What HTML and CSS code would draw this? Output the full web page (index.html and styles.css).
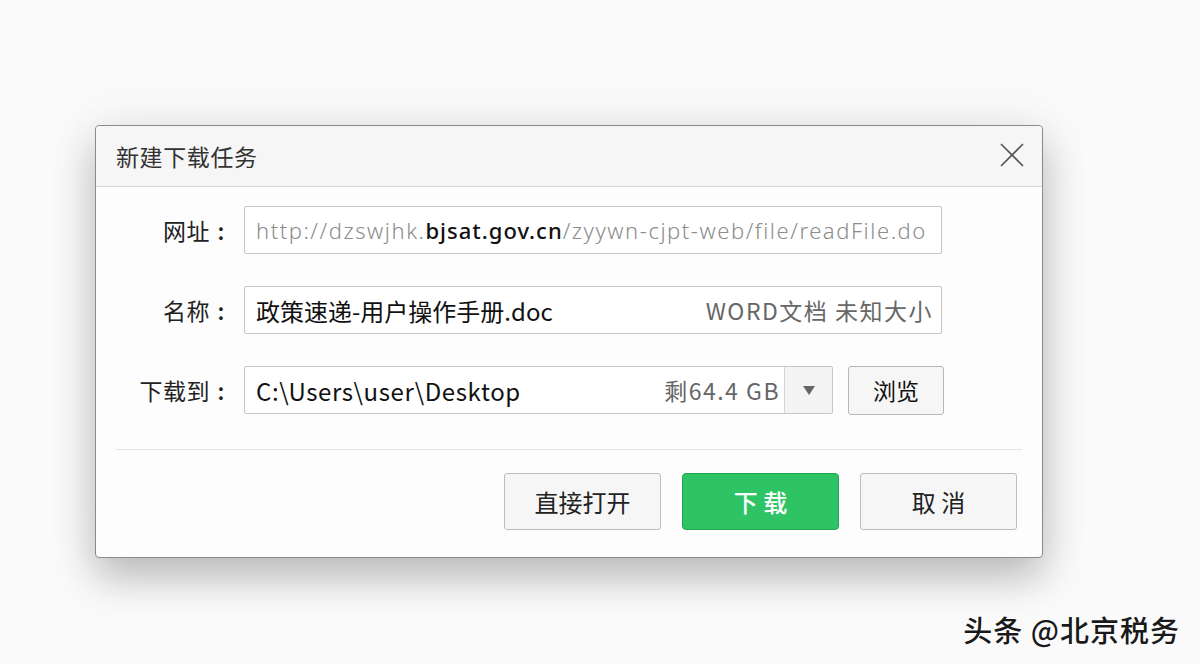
FILE: index.html
```html
<!DOCTYPE html>
<html lang="zh-CN">
<head>
<meta charset="utf-8">
<title>新建下载任务</title>
<link rel="stylesheet" href="styles.css">
</head>
<body>
<div class="dialog">
  <div class="titlebar">
    <span class="title">新建下载任务</span>
    <svg class="close" width="26" height="26" viewBox="0 0 26 26"><path d="M2 2 L24 24 M24 2 L2 24" stroke="#555" stroke-width="1.6" fill="none"/></svg>
  </div>
  <div class="body">
    <div class="row">
      <div class="label">网址<span class="colon">:</span></div>
      <div class="field url"><span class="dim">http://dzswjhk.</span><span class="strong">bjsat.gov.cn</span><span class="dim">/zyywn-cjpt-web/file/readFile.do</span></div>
    </div>
    <div class="row">
      <div class="label">名称<span class="colon">:</span></div>
      <div class="field"><span class="main">政策速递-用户操作手册.doc</span><span class="meta">WORD文档 未知大小</span></div>
    </div>
    <div class="row">
      <div class="label">下载到<span class="colon">:</span></div>
      <div class="field path"><span class="main path-text">C:\Users\user\Desktop</span><span class="meta">剩64.4 GB</span><span class="drop"><svg width="12" height="9" viewBox="0 0 12 9"><path d="M0 0 H12 L6 9 Z" fill="#666"/></svg></span></div>
      <button class="browse">浏览</button>
    </div>
  </div>
  <div class="sep"></div>
  <div class="actions">
    <button class="btn">直接打开</button>
    <button class="btn primary">下 载</button>
    <button class="btn">取 消</button>
  </div>
</div>
<div class="watermark">头条 @北京税务</div>
</body>
</html>
```
FILE: styles.css
```css
html, body {
  margin: 0;
  padding: 0;
}
body {
  width: 1200px;
  height: 664px;
  background: #fafafb;
  font-family: "Noto Sans CJK SC", "Noto Sans", sans-serif;
  padding: 125px 0 0 95px;
  box-sizing: border-box;
  position: relative;
  overflow: hidden;
}
.dialog {
  width: 948px;
  height: 433px;
  box-sizing: border-box;
  background: #fdfdfd;
  border: 1px solid #8a8a8a;
  border-radius: 4px;
  box-shadow: 0 20px 40px rgba(0,0,0,0.24), 0 0 60px rgba(0,0,0,0.06);
  display: flex;
  flex-direction: column;
}
.titlebar {
  height: 61px;
  box-sizing: border-box;
  background: #f6f6f6;
  border-bottom: 1px solid #d8d8d8;
  border-radius: 4px 4px 0 0;
  display: flex;
  align-items: center;
  justify-content: space-between;
  padding: 0 17px 0 20px;
}
.title {
  font-size: 23px;
  color: #333;
  letter-spacing: 0.6px;
}
.close {
  display: block;
  margin-top: -2px;
}
.body {
  padding: 19px 0 0 0;
  display: flex;
  flex-direction: column;
  gap: 32px;
}
.row {
  display: flex;
  align-items: center;
  height: 48px;
}
.label {
  width: 148px;
  box-sizing: border-box;
  padding-right: 12px;
  text-align: right;
  font-size: 23px;
  color: #222;
  letter-spacing: 0.5px;
}
.colon {
  display: inline-block;
  width: 22px;
  text-align: center;
  letter-spacing: 0;
  font-weight: 500;
}
.field {
  width: 698px;
  height: 48px;
  box-sizing: border-box;
  border: 1px solid #c6c6c6;
  border-radius: 2px;
  background: #fff;
  display: flex;
  align-items: center;
  padding: 0 8px 0 11px;
  font-size: 24px;
  white-space: nowrap;
  overflow: hidden;
}
.url {
  font-family: "Noto Sans", sans-serif;
  font-size: 22px;
  letter-spacing: 1.55px;
}
.dim {
  color: #8c8c8c;
  font-weight: 300;
}
.strong {
  color: #111;
  font-weight: 500;
  letter-spacing: 1px;
}
.main {
  color: #111;
  flex: 1;
}
.path-text {
  letter-spacing: 0.6px;
}
.meta {
  color: #666;
  font-size: 23px;
  letter-spacing: 1.5px;
}
.path {
  width: 589px;
  padding-right: 0;
}
.path .meta {
  padding-right: 2px;
}
.drop {
  width: 47px;
  height: 46px;
  margin-left: 2px;
  background: #f4f4f4;
  border-left: 1px solid #d6d6d6;
  display: flex;
  align-items: center;
  justify-content: center;
}
.browse {
  margin-left: 15px;
  width: 96px;
  height: 49px;
  background: #f6f6f6;
  border: 1px solid #b8b8b8;
  border-radius: 3px;
  font-family: "Noto Sans CJK SC", sans-serif;
  font-size: 23px;
  color: #111;
  padding: 0;
}
.sep {
  margin: 35px 20px 0 20px;
  height: 1px;
  background: #e2e2e2;
}
.actions {
  display: flex;
  justify-content: flex-end;
  gap: 21px;
  padding: 23px 25px 0 0;
}
.btn {
  width: 157px;
  height: 57px;
  box-sizing: border-box;
  background: #f6f6f6;
  border: 1px solid #bdbdbd;
  border-radius: 3px;
  font-family: "Noto Sans CJK SC", sans-serif;
  font-size: 24px;
  color: #222;
  padding: 0;
}
.btn.primary {
  background: #2ec465;
  border-color: #1fa450;
  border-radius: 4px;
  color: #fff;
  font-weight: 500;
}
.watermark {
  position: absolute;
  right: 20px;
  bottom: 14px;
  font-family: "Noto Sans CJK SC", sans-serif;
  font-size: 29px;
  font-weight: 500;
  letter-spacing: 1px;
  color: #1a1a1a;
  text-shadow: 0 0 3px #fff, 1px 1px 0 #fff;
}
```
